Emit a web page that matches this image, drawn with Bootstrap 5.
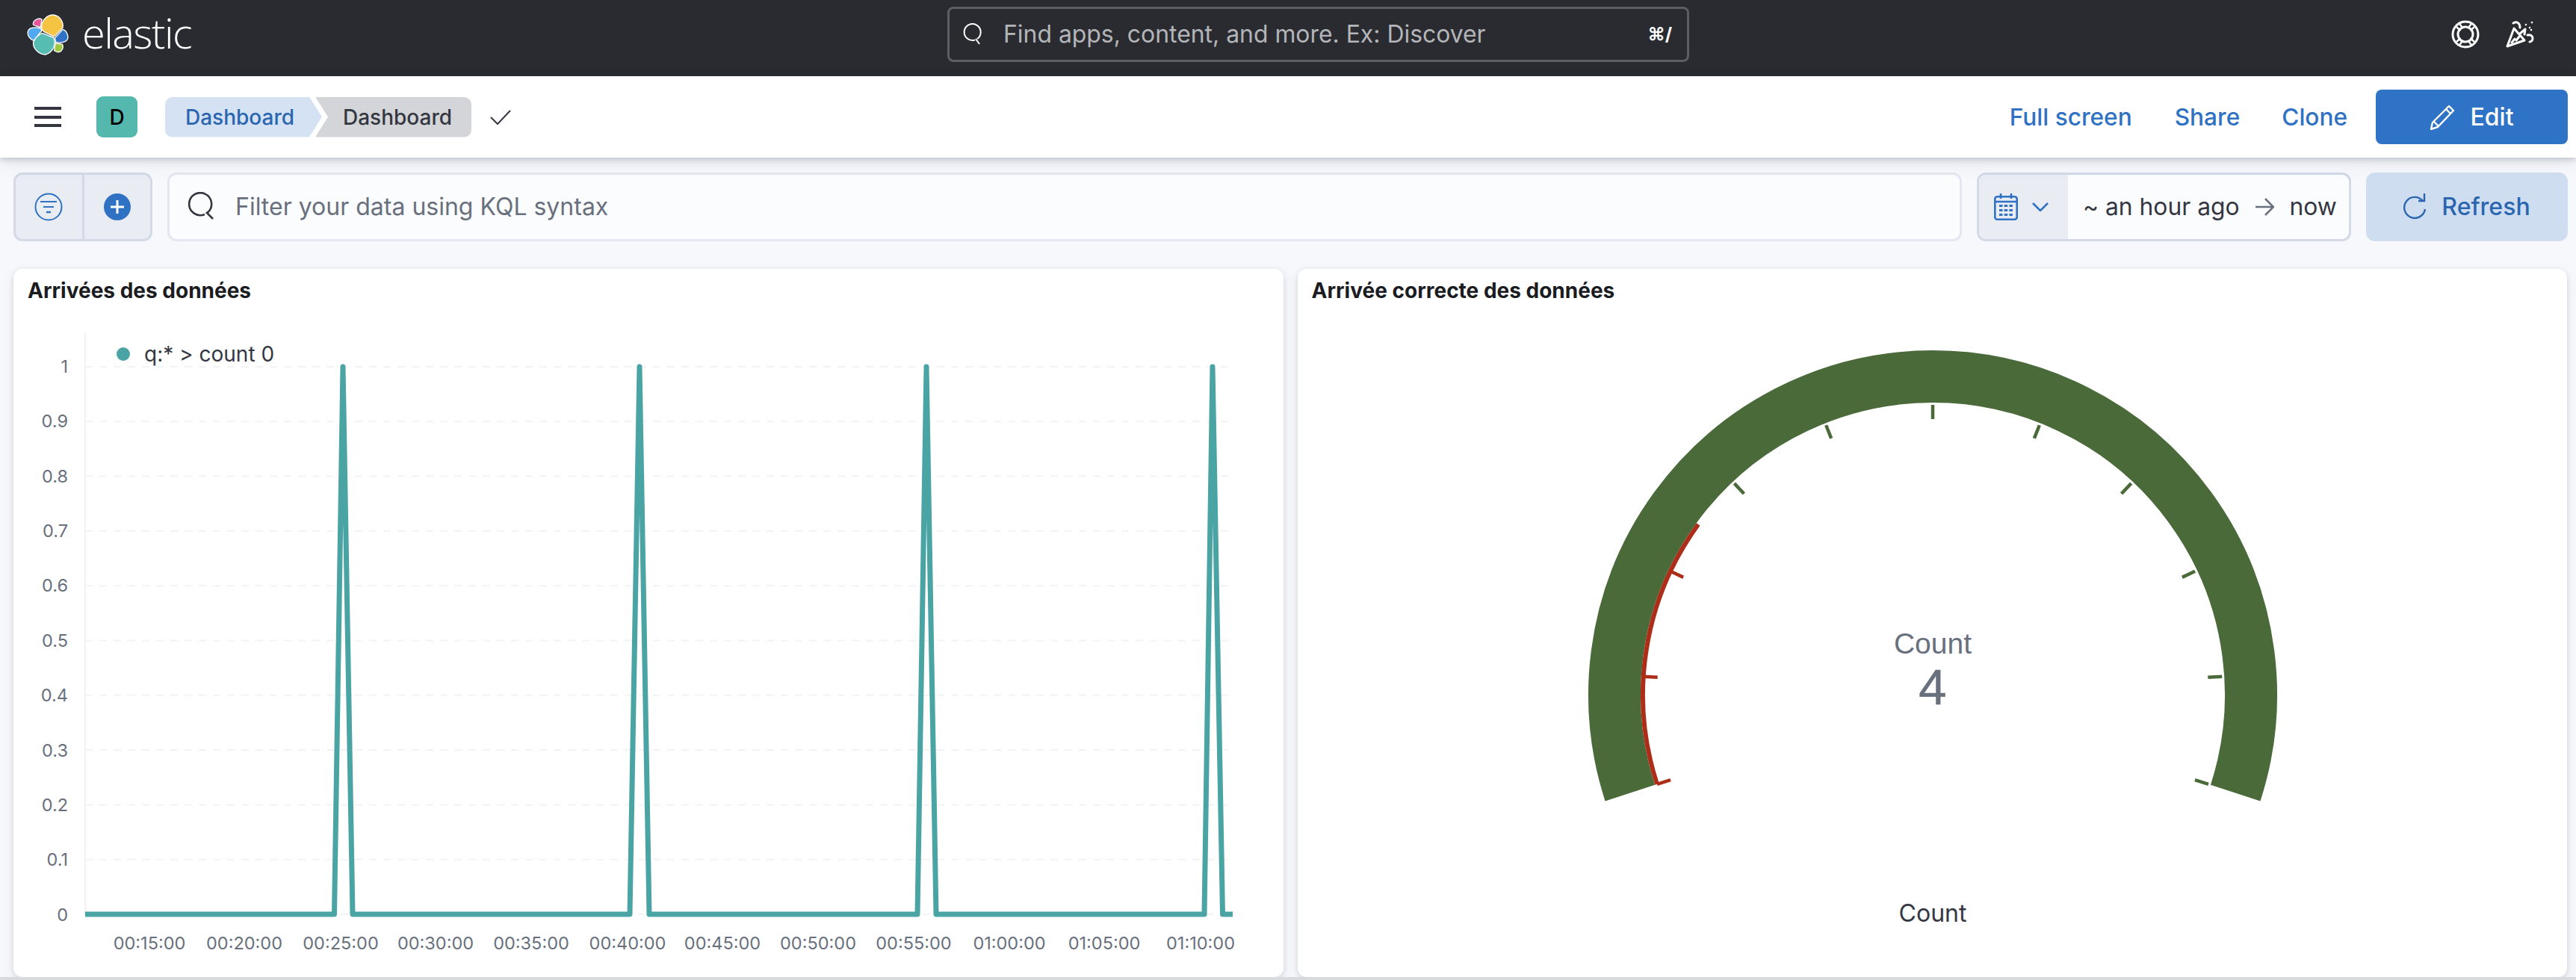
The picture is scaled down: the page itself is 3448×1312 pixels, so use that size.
<!DOCTYPE html>
<html lang="en">
<head>
<meta charset="utf-8">
<title>Dashboard - Elastic</title>
<link href="https://cdn.jsdelivr.net/npm/bootstrap@5.3.0/dist/css/bootstrap.min.css" rel="stylesheet">
<style>
html,body{height:100%}
body{font-family:Inter,"Liberation Sans",sans-serif;background:#f7f8fc;color:#343741;overflow:hidden;font-size:28px}
.kb-top{height:102px;background:#292b30;padding-bottom:10px}
.kb-brand{width:1268px;padding-left:36px;gap:18px}
.kb-word{font-family:"Open Sans",sans-serif;font-weight:300;font-size:56px;letter-spacing:-1.6px;color:#fff;line-height:1;margin-top:-6px}
.kb-find{width:993px;height:74px;border:3px solid #5c5e63;border-radius:8px;padding:0 20px 0 17px;color:#b3b5b9}
.kb-find span.ph{margin-left:27px;font-size:31.9px}
.kb-kbd{font-size:24px;font-weight:700;color:#fff;margin-left:auto}
.kb-topright{gap:0;padding-left:1px}
.kb-bar{height:109px;background:#fff;box-shadow:0 2px 8px rgba(65,75,95,.28),0 8px 22px rgba(65,75,95,.1);position:relative;z-index:2;padding:0 11px 0 46px}
.kb-ham{width:36px;height:27px;margin-right:47px;border-top:4px solid #343741;border-bottom:4px solid #343741;position:relative}
.kb-ham::after{content:"";position:absolute;left:0;right:0;top:7.5px;height:4px;background:#343741}
.kb-avatar{width:55px;height:55px;background:#54b8ae;border-radius:9px;color:#000;font-size:28px;font-weight:500;margin-right:37px}
.kb-crumb{height:54px;font-size:28px;font-weight:500;line-height:54px}
.kb-crumb-a{width:210px;background:#d5e2f3;color:#2a66b0;border-radius:10px 0 0 10px;padding-left:27px;clip-path:polygon(0 0,193px 0,100% 50%,193px 100%,0 100%)}
.kb-crumb-b{width:209px;margin-left:-9px;background:#d3d5d8;color:#343741;border-radius:0 10px 10px 0;padding-left:37px;clip-path:polygon(0 0,100% 0,100% 100%,0 100%,17px 50%)}
.kb-check{margin-left:25px}
.kb-link{color:#2f71c3;font-size:31.6px;font-weight:500;text-decoration:none}
.kb-edit{width:257px;height:73px;background:#2f73c6;border:0;border-radius:8px;color:#fff;font-size:32px;font-weight:500;margin-left:38px;gap:20px}
.kb-query{height:92px;margin:20px 11px 37px 18px;gap:20px}
.kb-addgroup{width:186px;background:#e9edf3;border:3px solid #d3dae6;border-radius:12px}
.kb-addgroup>div{flex:1}
.kb-addgroup>div+div{border-left:3px solid #d3dae6}
.kb-kql{flex:1;background:#fbfcfe;border:3px solid #e4e6f1;border-radius:12px;padding-left:23px;color:#69707d;font-size:32px;gap:27px}
.kb-date{width:501px;background:#fbfcfe;border:3px solid #d3dae6;border-radius:12px;overflow:hidden;font-size:31.8px;color:#343741}
.kb-date-btn{width:119px;background:#e9edf3;padding-left:20px;gap:19px;height:100%}
.kb-date-txt{padding-left:20px;gap:21px}
.kb-refresh{width:270px;background:#cfddf0;border:0;border-radius:12px;color:#2a66b0;font-size:32px;font-weight:500;gap:21px}
.kb-panels{gap:19px;padding:0 12px 0 18px;height:948px}
.kb-panel{flex:1 1 0;min-width:0;background:#fff;border:0;border-radius:12px;box-shadow:0 2px 6px rgba(65,75,95,.18),0 6px 18px rgba(65,75,95,.08);overflow:hidden}
.kb-title{height:56px;padding:12px 0 0 19px;font-size:28px;font-weight:700;color:#1a1c21;line-height:34px;margin:0}
.kb-panel svg{display:block}
.ax{font-family:Inter,sans-serif;font-size:23.5px;fill:#69707d}
.ax-l{font-family:Inter,sans-serif;font-size:28px;fill:#343741}
.ga{font-family:"Liberation Sans",sans-serif;fill:#69707d;text-anchor:middle}
.ga-b{stroke:#69707d;stroke-width:.5}
.kb-foot{position:fixed;left:0;right:0;bottom:0;height:4px;background:#d8dade}
</style>
</head>
<body>
<header class="kb-top d-flex align-items-center">
  <div class="kb-brand d-flex align-items-center">
    <svg width="56" height="56" viewBox="50 55 165 165" aria-hidden="true">
      <g stroke="#fff" stroke-width="4" stroke-linejoin="round">
        <path fill="#e8559a" d="M75 100C72 84 92 70 109 78L104 110C92 106 82 104 75 100Z"/>
        <path fill="#53a9ef" d="M54 127C57 112 74 106 104 114L109 122L78 163C61 156 51 142 54 127Z"/>
        <path fill="#f5c443" d="M108 110C107 82 130 60 155 61C181 64 196 90 191 112L158 146L125 131C113 126 108 120 108 110Z"/>
        <path fill="#57bdb2" d="M110 133L155 150C167 176 155 206 125 217C100 219 74 196 75 170C80 155 95 140 110 133Z"/>
        <path fill="#2f73c6" d="M160 152L192 118C210 124 216 150 208 160C199 171 175 172 164 168Z"/>
        <path fill="#9cc83c" d="M162 172L190 177C196 190 188 210 170 207L158 202Z"/>
      </g>
    </svg>
    <span class="kb-word">elastic</span>
  </div>
  <div class="kb-find d-flex align-items-center">
    <svg width="28" height="30" viewBox="0 0 28 30" fill="none" stroke="#fff" stroke-width="2" aria-hidden="true"><path d="M17 22.5A11 11 0 1 1 20 21M18 21l5 7"/></svg>
    <span class="ph">Find apps, content, and more. Ex: Discover</span>
    <span class="kb-kbd">⌘/</span>
  </div>
  <div class="kb-topright d-flex align-items-center">
    <svg style="margin-left:1019px" width="38" height="38" viewBox="0 0 38 38" fill="none" stroke="#fff" stroke-width="3" aria-hidden="true"><circle cx="19" cy="19" r="17"/><circle cx="19" cy="19" r="10"/><path d="M7 9l5.500 5M31 9l-5.500 5M7 29l5.500-5M31 29l-5.500-5M11 5l5 6M27 5l-5 6M11 33l5-6M27 33l-5-6" stroke-width="2.400"/></svg>
    <svg style="margin-left:35px" width="38" height="36" viewBox="0 0 38 36" fill="none" stroke="#fff" stroke-width="3" stroke-linejoin="round" stroke-linecap="round" aria-hidden="true"><path d="M11 10L25 26L2 34Z"/><path d="M8 29l4-5M14 26l4-5M10 3c5-3 9 0 9 6M19 17l7-6-1 7M29 19c4-1 7 1 7 4s-2 5-4 5"/><path d="M27 5v.1M32 9v.1M35 2v.1M34 12v.1" stroke-width="2.600"/></svg>
  </div>
</header>

<nav class="kb-bar d-flex align-items-center">
  <div class="kb-ham"></div>
  <div class="kb-avatar d-flex align-items-center justify-content-center">D</div>
  <div class="d-flex">
    <div class="kb-crumb kb-crumb-a">Dashboard</div>
    <div class="kb-crumb kb-crumb-b">Dashboard</div>
  </div>
  <svg class="kb-check" width="28" height="20" viewBox="0 0 28 20" fill="none" stroke="#343741" stroke-width="2" aria-hidden="true"><path d="M1 10l9 9L27 1"/></svg>
  <div class="d-flex align-items-center ms-auto">
    <a class="kb-link" href="#">Full screen</a>
    <a class="kb-link" style="margin-left:57px" href="#">Share</a>
    <a class="kb-link" style="margin-left:56px" href="#">Clone</a>
    <button class="btn kb-edit d-flex align-items-center justify-content-center" type="button">
      <svg width="34" height="34" viewBox="0 0 34 34" fill="none" stroke="#fff" stroke-width="2.4" stroke-linejoin="round" aria-hidden="true"><path d="M26 2l6 6L11 30l-9 3 2-9Z"/><path d="M22 6l6 6M6 23l6 6"/></svg>
      <span>Edit</span>
    </button>
  </div>
</nav>

<section class="kb-query d-flex">
  <div class="kb-addgroup d-flex">
    <div class="d-flex align-items-center justify-content-center">
      <svg width="38" height="38" viewBox="0 0 38 38" fill="none" stroke="#2f71c3" stroke-width="2" aria-hidden="true"><circle cx="19" cy="19" r="17.5"/><path d="M8 12h22M12 19h14" stroke-width="2"/><path d="M16 26h6" stroke-width="2.4"/></svg>
    </div>
    <div class="d-flex align-items-center justify-content-center">
      <svg width="36" height="36" viewBox="0 0 36 36" aria-hidden="true"><circle cx="18" cy="18" r="18" fill="#2f71c3"/><path d="M18 9v18M9 18h18" stroke="#fff" stroke-width="3" fill="none"/></svg>
    </div>
  </div>
  <div class="kb-kql d-flex align-items-center">
    <svg width="38" height="40" viewBox="0 0 38 40" fill="none" stroke="#343741" stroke-width="2.6" aria-hidden="true"><path d="M24 30A15 15 0 1 1 28 27.5M26 27l9 9"/></svg>
    <span>Filter your data using KQL syntax</span>
  </div>
  <div class="kb-date d-flex align-items-center">
    <div class="kb-date-btn d-flex align-items-center">
      <svg width="32" height="36" viewBox="0 0 32 36" fill="none" stroke="#2f71c3" stroke-width="2.6" aria-hidden="true"><rect x="1.3" y="4.3" width="29.4" height="30.4" rx="3"/><path d="M1 11h30M9 0v7M23 0v7"/><path d="M7 16.5h18M7 22.5h18M7 28.5h18" stroke-dasharray="4.5 2.2" stroke-width="3"/></svg>
      <svg width="22" height="12" viewBox="0 0 22 12" fill="none" stroke="#2f71c3" stroke-width="2.6" aria-hidden="true"><path d="M1 1l10 10L21 1"/></svg>
    </div>
    <div class="kb-date-txt d-flex align-items-center">
      <span>~ an hour ago</span>
      <svg width="25" height="24" viewBox="0 0 25 24" fill="none" stroke="#69707d" stroke-width="2.6" aria-hidden="true"><path d="M0 12h23M13 1l11 11-11 11"/></svg>
      <span>now</span>
    </div>
  </div>
  <button class="btn kb-refresh d-flex align-items-center justify-content-center" type="button">
    <svg width="30" height="38" viewBox="0 0 30 38" fill="none" stroke="#2a66b0" stroke-width="2.4" aria-hidden="true"><path d="M26 11A14 14 0 1 0 29 22"/><path d="M28 1v10H20"/></svg>
    <span>Refresh</span>
  </button>
</section>

<main class="kb-panels d-flex">
  <div class="card kb-panel">
    <h2 class="kb-title">Arrivées des données</h2>
    <svg id="kb-line" width="1700" height="892" viewBox="18 416 1700 892" role="img" aria-label="Arrivées des données">
      <path stroke="#f1f2f4" stroke-width="2" fill="none" d="M114 445V1224"/>
      <path stroke="#f2f3f5" stroke-width="2" fill="none" stroke-dasharray="10 9" d="M114 491H1650M114 564.3H1650M114 637.6H1650M114 710.9H1650M114 784.2H1650M114 857.5H1650M114 930.8H1650M114 1004.1H1650M114 1077.4H1650M114 1150.7H1650M114 1224H1650"/>
      <g class="ax" text-anchor="end">
        <text x="91" y="499">1</text><text x="91" y="572">0.9</text><text x="91" y="646">0.8</text><text x="91" y="719">0.7</text><text x="91" y="792">0.6</text><text x="91" y="866">0.5</text><text x="91" y="939">0.4</text><text x="91" y="1013">0.3</text><text x="91" y="1086">0.2</text><text x="91" y="1159">0.1</text><text x="91" y="1233">0</text>
      </g>
      <g class="ax" text-anchor="middle">
        <text x="200" y="1271">00:15:00</text><text x="327" y="1271">00:20:00</text><text x="456" y="1271">00:25:00</text><text x="583" y="1271">00:30:00</text><text x="711" y="1271">00:35:00</text><text x="840" y="1271">00:40:00</text><text x="967" y="1271">00:45:00</text><text x="1095" y="1271">00:50:00</text><text x="1223" y="1271">00:55:00</text><text x="1351" y="1271">01:00:00</text><text x="1478" y="1271">01:05:00</text><text x="1607" y="1271">01:10:00</text>
      </g>
      <path fill="none" stroke="#4ba4a4" stroke-width="7" stroke-linejoin="round" d="M114 1224H447.5L459 491L472 1224H843L856 491L869 1224H1228L1240 491L1253 1224H1612L1623 491L1636.5 1224H1650"/>
      <circle cx="165" cy="474" r="9" fill="#4ba4a4"/>
      <text class="ax-l" x="193" y="484" xml:space="preserve">q:* &gt; count 0</text>
    </svg>
  </div>
  <div class="card kb-panel">
    <h2 class="kb-title">Arrivée correcte des données</h2>
    <svg width="1699" height="892" viewBox="1737 416 1699 892" role="img" aria-label="Arrivée correcte des données">
      <path fill="none" stroke="#4a6a3a" stroke-width="70" d="M2181.8 1061.6A426 426 0 1 1 2992.2 1061.6"/>
      <path fill="none" stroke="#ad2e18" stroke-width="6" d="M2218 1049.9A388 388 0 0 1 2273.1 701.9"/>
      <g stroke-width="4.5" fill="none">
        <g stroke="#ad2e18">
          <path d="M2587 542V561" transform="rotate(-108 2587 930)"/>
          <path d="M2587 542V561" transform="rotate(-86.4 2587 930)"/>
          <path d="M2587 542V561" transform="rotate(-64.8 2587 930)"/>
        </g>
        <g stroke="#4a6a3a">
          <path d="M2587 542V561" transform="rotate(-43.2 2587 930)"/>
          <path d="M2587 542V561" transform="rotate(-21.6 2587 930)"/>
          <path d="M2587 542V561"/>
          <path d="M2587 542V561" transform="rotate(21.6 2587 930)"/>
          <path d="M2587 542V561" transform="rotate(43.2 2587 930)"/>
          <path d="M2587 542V561" transform="rotate(64.8 2587 930)"/>
          <path d="M2587 542V561" transform="rotate(86.4 2587 930)"/>
          <path d="M2587 542V561" transform="rotate(108 2587 930)"/>
        </g>
      </g>
      <text class="ga" x="2587" y="875" font-size="39">Count</text>
      <text class="ga ga-b" x="2587" y="943" font-size="67">4</text>
      <text x="2587" y="1234" text-anchor="middle" font-family="Inter,sans-serif" font-size="32" fill="#343741">Count</text>
    </svg>
  </div>
</main>
<div class="kb-foot"></div>
<script src="https://cdn.jsdelivr.net/npm/bootstrap@5.3.0/dist/js/bootstrap.bundle.min.js"></script>
</body>
</html>
